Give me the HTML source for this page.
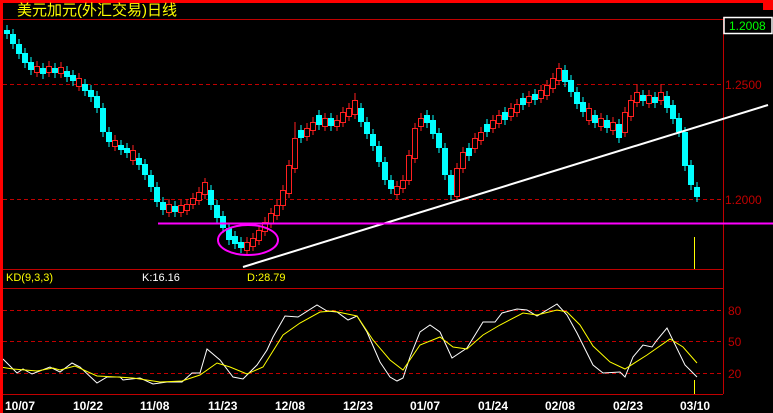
<!DOCTYPE html><html><head><meta charset="utf-8"><style>
html,body{margin:0;padding:0;background:#000;width:773px;height:413px;overflow:hidden}
svg{display:block}
text{font-family:"Liberation Sans","Noto Sans CJK SC",sans-serif}
</style></head><body>
<svg width="773" height="413" xmlns="http://www.w3.org/2000/svg">
<rect x="0" y="0" width="773" height="413" fill="#000"/>
<g stroke="#c00000" stroke-width="1">
<line x1="3" y1="19.5" x2="723" y2="19.5"/>
<line x1="3" y1="84.5" x2="723" y2="84.5" stroke-dasharray="4,3"/>
<line x1="3" y1="199.5" x2="723" y2="199.5" stroke-dasharray="4,3"/>
<line x1="3" y1="269.5" x2="723" y2="269.5"/>
<line x1="3" y1="288.5" x2="723" y2="288.5"/>
<line x1="3" y1="310.5" x2="723" y2="310.5" stroke-dasharray="4,3"/>
<line x1="3" y1="341.5" x2="723" y2="341.5" stroke-dasharray="4,3"/>
<line x1="3" y1="373.5" x2="723" y2="373.5" stroke-dasharray="4,3"/>
<line x1="3" y1="394.5" x2="723" y2="394.5"/>
<line x1="723.5" y1="17" x2="723.5" y2="394"/>
</g>
<!-- cyan wicks -->
<path stroke="#00ffff" fill="none" d="M7,25V39 M13,29V49 M19,39V59 M25,48V68 M31,57V75 M43,63V79 M55,63V78 M67,66V82 M73,70V86 M85,79V96 M91,85V102 M97,91V113 M103,103V137 M109,127V147 M121,140V155 M127,143V158 M139,153V170 M145,159V180 M151,170V192 M157,182V207 M163,197V215 M175,201V217 M211,185V210 M217,200V223 M223,211V233 M229,223V245 M235,231V249 M241,237V253 M301,125V143 M319,110V130 M331,113V131 M361,103V127 M367,117V139 M373,129V151 M379,141V167 M385,157V185 M391,175V194 M427,110V128 M433,115V139 M439,128V153 M445,143V180 M451,170V200 M469,143V161 M487,119V137 M505,107V125 M523,93V110 M535,89V105 M565,65V87 M571,75V97 M577,87V109 M583,97V117 M595,110V128 M607,115V133 M619,119V143 M643,90V106 M655,92V108 M667,91V113 M673,100V124 M679,113V137 M685,127V171 M691,160V190 M697,182V202"/>
<!-- red wicks -->
<path stroke="#ff2020" fill="none" d="M37,61V77 M49,61V77 M61,62V78 M79,73V91 M115,135V151 M133,145V165 M169,199V217 M181,200V217 M187,199V215 M193,193V209 M199,187V205 M205,178V199 M247,237V255 M253,233V251 M259,225V245 M265,217V236 M271,208V228 M277,200V220 M283,185V210 M289,160V198 M295,122V173 M307,123V141 M313,117V135 M325,113V131 M337,115V131 M343,107V127 M349,103V121 M355,93V119 M397,181V199 M403,175V193 M409,150V185 M415,123V163 M421,113V131 M457,163V201 M463,147V173 M475,133V153 M481,127V145 M493,115V133 M499,110V128 M511,103V121 M517,99V117 M529,91V107 M541,85V103 M547,80V100 M553,73V93 M559,63V85 M589,103V125 M601,113V131 M613,117V135 M625,107V137 M631,95V121 M637,84V107 M649,90V108 M661,84V105"/>
<!-- cyan bodies -->
<path fill="#00ffff" d="M4,30h6v4h-6z M10,34h6v10h-6z M16,44h6v10h-6z M22,53h6v10h-6z M28,62h6v8h-6z M40,68h6v6h-6z M52,68h6v5h-6z M64,71h6v6h-6z M70,75h6v6h-6z M82,84h6v7h-6z M88,90h6v7h-6z M94,96h6v12h-6z M100,108h6v24h-6z M106,132h6v10h-6z M118,145h6v5h-6z M124,148h6v5h-6z M136,158h6v7h-6z M142,164h6v11h-6z M148,175h6v12h-6z M154,187h6v15h-6z M160,202h6v8h-6z M172,206h6v6h-6z M208,190h6v15h-6z M214,205h6v13h-6z M220,216h6v12h-6z M226,228h6v12h-6z M232,236h6v8h-6z M238,242h6v6h-6z M298,130h6v8h-6z M316,115h6v10h-6z M328,118h6v8h-6z M358,108h6v14h-6z M364,122h6v12h-6z M370,134h6v12h-6z M376,146h6v16h-6z M382,162h6v18h-6z M388,180h6v9h-6z M424,115h6v8h-6z M430,120h6v14h-6z M436,133h6v15h-6z M442,148h6v27h-6z M448,175h6v20h-6z M466,148h6v8h-6z M484,124h6v8h-6z M502,112h6v8h-6z M520,98h6v7h-6z M532,94h6v6h-6z M562,70h6v12h-6z M568,80h6v12h-6z M574,92h6v12h-6z M580,102h6v10h-6z M592,115h6v8h-6z M604,120h6v8h-6z M616,124h6v14h-6z M640,95h6v6h-6z M652,97h6v6h-6z M664,96h6v12h-6z M670,105h6v14h-6z M676,118h6v14h-6z M682,132h6v34h-6z M688,165h6v20h-6z M694,187h6v10h-6z"/>
<!-- red bodies -->
<path fill="#000" stroke="#ff2020" d="M34.5,66.5h5v6h-5z M46.5,66.5h5v6h-5z M58.5,67.5h5v6h-5z M76.5,78.5h5v8h-5z M112.5,140.5h5v6h-5z M130.5,150.5h5v10h-5z M166.5,204.5h5v8h-5z M178.5,205.5h5v7h-5z M184.5,204.5h5v6h-5z M190.5,198.5h5v6h-5z M196.5,192.5h5v8h-5z M202.5,182.5h5v12h-5z M244.5,242.5h5v8h-5z M250.5,238.5h5v8h-5z M256.5,230.5h5v10h-5z M262.5,222.5h5v9h-5z M268.5,213.5h5v10h-5z M274.5,205.5h5v10h-5z M280.5,190.5h5v15h-5z M286.5,165.5h5v28h-5z M292.5,138.5h5v30h-5z M304.5,128.5h5v8h-5z M310.5,122.5h5v8h-5z M322.5,118.5h5v8h-5z M334.5,120.5h5v6h-5z M340.5,112.5h5v10h-5z M346.5,108.5h5v8h-5z M352.5,100.5h5v14h-5z M394.5,186.5h5v8h-5z M400.5,180.5h5v8h-5z M406.5,155.5h5v25h-5z M412.5,128.5h5v30h-5z M418.5,118.5h5v8h-5z M454.5,168.5h5v28h-5z M460.5,152.5h5v16h-5z M472.5,138.5h5v10h-5z M478.5,132.5h5v8h-5z M490.5,120.5h5v8h-5z M496.5,115.5h5v8h-5z M508.5,108.5h5v8h-5z M514.5,104.5h5v8h-5z M526.5,96.5h5v6h-5z M538.5,90.5h5v8h-5z M544.5,85.5h5v10h-5z M550.5,78.5h5v10h-5z M556.5,68.5h5v12h-5z M586.5,108.5h5v12h-5z M598.5,118.5h5v8h-5z M610.5,122.5h5v8h-5z M622.5,112.5h5v20h-5z M628.5,100.5h5v16h-5z M634.5,92.5h5v10h-5z M646.5,95.5h5v8h-5z M658.5,92.5h5v8h-5z"/>
<polyline points="243,267 768,105" stroke="#fff" stroke-width="2" fill="none"/>
<line x1="158" y1="223.5" x2="773" y2="223.5" stroke="#ff00ff" stroke-width="2"/>
<ellipse cx="248" cy="240" rx="30" ry="15" stroke="#ff00ff" stroke-width="2" fill="none"/>
<line x1="694.5" y1="237" x2="694.5" y2="269" stroke="#ffff00"/>
<line x1="694.5" y1="380" x2="694.5" y2="394" stroke="#ffff00"/>
<polyline fill="none" stroke="#fff" stroke-width="1" points="3,359 17,373 23,369 32,374 50,367 60,372 72,363 80,367 97,383 107,377 120,377 123,380 140,378 153,384 167,382 182,382 192,373 200,373 207,349 220,360 233,377 243,379 257,365 267,350 273,337 285,316 298,317 317,305 327,311 337,312 348,320 357,316 367,332 380,362 390,377 397,381 403,378 410,357 420,332 430,325 440,332 452,358 467,348 483,322 495,322 502,313 517,309 527,310 537,316 557,304 567,315 577,333 593,365 603,373 620,372 625,377 633,357 643,345 652,347 657,340 667,328 685,365 697,377"/>
<polyline fill="none" stroke="#ffff00" stroke-width="1" points="0,367 13,369 37,371 53,368 60,370 75,366 97,376 117,377 133,378 160,382 182,381 200,375 217,363 230,367 247,374 263,367 283,335 300,323 320,312 333,311 357,316 373,340 390,360 403,370 420,345 440,337 453,347 467,349 483,335 500,325 523,313 537,315 557,310 567,312 580,325 593,346 610,362 625,369 647,355 670,339 683,347 697,363"/>
<rect x="0" y="0" width="773" height="3" fill="#ff0000"/>
<rect x="0" y="0" width="3" height="413" fill="#ff0000"/>
<rect x="763" y="0" width="10" height="10" fill="#ff0000"/>
<text x="17" y="15" fill="#ffff00" font-size="15">美元加元(外汇交易)日线</text>
<rect x="724" y="17.5" width="48" height="16" fill="#000" stroke="#fff" stroke-width="1.5"/>
<text x="729" y="30" fill="#00ff00" font-size="12">1.2008</text>
<text x="725" y="89" fill="#c00000" font-size="12">1.2500</text>
<text x="725" y="204" fill="#c00000" font-size="12">1.2000</text>
<text x="728" y="315" fill="#c00000" font-size="12">80</text>
<text x="728" y="346" fill="#c00000" font-size="12">50</text>
<text x="728" y="378" fill="#c00000" font-size="12">20</text>
<text x="6" y="281" fill="#ffff00" font-size="11">KD(9,3,3)</text>
<text x="142" y="281" fill="#fff" font-size="11">K:16.16</text>
<text x="247" y="281" fill="#ffff00" font-size="11">D:28.79</text>
<g fill="#fff" font-size="12" font-weight="bold" font-family="Liberation Mono,monospace">
<text x="5" y="410" font-family="Liberation Mono,monospace" font-weight="bold">10/07</text>
<text x="73" y="410" font-family="Liberation Mono,monospace" font-weight="bold">10/22</text>
<text x="140" y="410" font-family="Liberation Mono,monospace" font-weight="bold">11/08</text>
<text x="208" y="410" font-family="Liberation Mono,monospace" font-weight="bold">11/23</text>
<text x="275" y="410" font-family="Liberation Mono,monospace" font-weight="bold">12/08</text>
<text x="343" y="410" font-family="Liberation Mono,monospace" font-weight="bold">12/23</text>
<text x="410" y="410" font-family="Liberation Mono,monospace" font-weight="bold">01/07</text>
<text x="478" y="410" font-family="Liberation Mono,monospace" font-weight="bold">01/24</text>
<text x="545" y="410" font-family="Liberation Mono,monospace" font-weight="bold">02/08</text>
<text x="613" y="410" font-family="Liberation Mono,monospace" font-weight="bold">02/23</text>
<text x="680" y="410" font-family="Liberation Mono,monospace" font-weight="bold">03/10</text>
</g>
</svg>
</body></html>
